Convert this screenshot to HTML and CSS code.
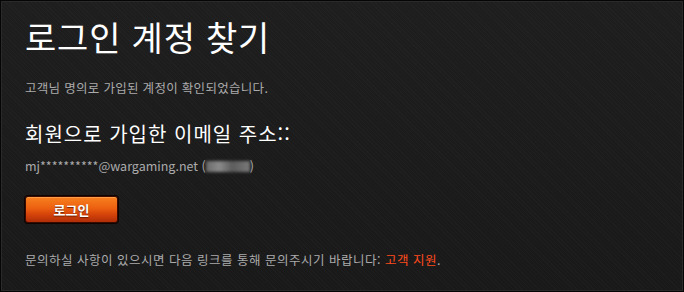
FILE: index.html
```html
<!DOCTYPE html>
<html lang="ko">
<head>
    <meta charset="UTF-8">
    <title>로그인 계정 찾기</title>
    <link rel="stylesheet" href="styles.css">
</head>
<body>
    <div class="panel">
        <h1 class="title">로그인 계정 찾기</h1>
        <p class="info">고객님 명의로 가입된 계정이 확인되었습니다.</p>

        <h2 class="subtitle">회원으로 가입한 이메일 주소::</h2>
        <p class="email">mj**********@wargaming.net (<span class="hidden-name"></span>)</p>

        <button class="btn-login">로그인</button>

        <p class="help">문의하실 사항이 있으시면 다음 링크를 통해 문의주시기 바랍니다: <a href="#" class="link">고객 지원</a>.</p>
    </div>
</body>
</html>
```

FILE: styles.css
```css
body {
    margin: 0;
    background: #000;
    font-family: "Noto Sans CJK KR", "Noto Sans", sans-serif;
}

.panel {
    box-sizing: border-box;
    width: 684px;
    height: 292px;
    border: 1px solid #050505;
    padding: 16px 0 0 24px;
    background-color: #1b1b1c;
    background-image:
        repeating-linear-gradient(45deg, rgba(255,255,255,0.015) 0 1px, transparent 1px 3px),
        linear-gradient(#1e1e1f, #19191a);
    box-shadow: inset 0 0 0 1px #2a2a2a;
}

.title {
    margin: 0;
    font-size: 34px;
    line-height: 40px;
    font-weight: normal;
    letter-spacing: 0.8px;
    color: #fff;
}

.info,
.email,
.help {
    margin: 0;
    font-size: 12.5px;
    line-height: 16px;
    color: #ababab;
    letter-spacing: 0.3px;
}

.info {
    margin-top: 23px;
}

.subtitle {
    margin: 25px 0 0;
    font-size: 20px;
    line-height: 26px;
    font-weight: normal;
    letter-spacing: 1px;
    color: #fff;
}

.email {
    margin-top: 11px;
    letter-spacing: 0;
}

.hidden-name {
    display: inline-block;
    width: 44px;
    height: 11px;
    vertical-align: -1px;
    background: linear-gradient(90deg, #6a6a6a, #8a8a8a 30%, #5c5c5c 60%, #7a7a7a);
    filter: blur(1.5px);
}

.btn-login {
    display: block;
    margin-top: 22px;
    width: 93px;
    height: 27px;
    padding: 0;
    border: 1px solid #3a0900;
    border-radius: 3px;
    background: linear-gradient(#f7801f, #ec6010 45%, #d4430a 70%, #b02e08);
    box-shadow: 0 0 0 1px #100400, inset 0 1px 0 rgba(255,190,110,0.5);
    color: #fff;
    font-family: inherit;
    font-size: 13px;
    font-weight: bold;
    text-shadow: 0 1px 1px #6a1e00;
    cursor: pointer;
}

.help {
    margin-top: 29px;
    letter-spacing: 0.5px;
}

.link {
    color: #ff4b1c;
    text-decoration: none;
}
```
